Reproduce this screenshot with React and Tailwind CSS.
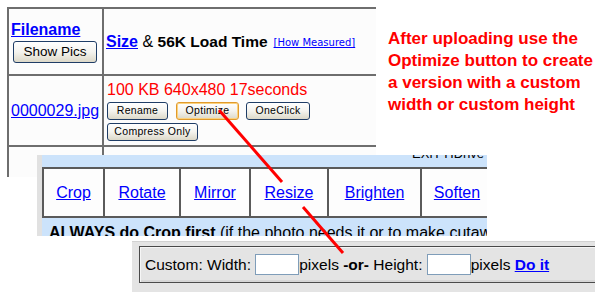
export default function App() {
  const btn =
    "h-[18px] rounded-[3px] border border-[#1f3d66] bg-gradient-to-b from-white via-[#f4f3ee] to-[#dcd8c8] text-[10.5px] tracking-[0.3px] font-['Liberation_Sans',Arial,sans-serif] text-black flex items-center justify-center leading-none";
  return (
    <div className="relative w-[610px] h-[300px] overflow-hidden bg-white font-['Liberation_Sans',Arial,sans-serif] text-black">
      <div className="flex pt-[7px] pl-[7px]">
        <div className="w-[369px] shrink-0 grid grid-cols-[95px_1fr] border-t-2 border-l-2 border-[#6e6e6e] bg-[#fcfcfc]">
          <div className="h-[67px] border-r-2 border-b-2 border-[#6e6e6e] flex flex-col justify-center pl-[2px]">
            <a className="text-[16px] leading-[18px] font-bold text-[#0000ff] underline">Filename</a>
            <button className="mt-[2px] ml-[2px] w-[84px] h-[22px] rounded-[3px] border border-[#1f3d66] bg-gradient-to-b from-white via-[#f4f3ee] to-[#dcd8c8] text-[13.5px] leading-none text-black">
              Show Pics
            </button>
          </div>
          <div className="h-[67px] border-b-2 border-[#6e6e6e] flex items-center pl-[2px] whitespace-nowrap">
            <a className="text-[16px] font-bold text-[#0000ff] underline">Size</a>
            <span className="text-[16px]">&nbsp;&amp;&nbsp;</span>
            <span className="text-[15.5px] font-bold">56K Load Time</span>
            <span className="text-[10px] ml-[6px] mt-[2px] font-['DejaVu_Sans',Verdana,sans-serif] text-[#0000ff] underline">[How Measured]</span>
          </div>
          <div className="h-[71px] border-r-2 border-b-2 border-[#6e6e6e] flex items-center pl-[2px]">
            <a className="text-[16px] text-[#0000ff] underline">0000029.jpg</a>
          </div>
          <div className="h-[71px] border-b-2 border-[#6e6e6e] flex flex-col justify-center pl-[3px]">
            <div className="text-[16px] leading-[18px] text-[#ff0000] whitespace-nowrap">100 KB 640x480 17seconds</div>
            <div className="flex mt-[3px]">
              <button className={btn + " w-[61px]"}>Rename</button>
              <button className="ml-[8px] w-[63px] h-[18px] rounded-[3px] border border-[#e19a2c] shadow-[inset_0_0_0_1px_#fbd27e] bg-gradient-to-b from-white via-[#f4f3ee] to-[#dcd8c8] text-[10.5px] tracking-[0.3px] flex items-center justify-center leading-none">
                Optimize
              </button>
              <button className={btn + " ml-[7px] w-[64px]"}>OneClick</button>
            </div>
            <div className="flex mt-[3px]">
              <button className={btn + " w-[91px]"}>Compress Only</button>
            </div>
          </div>
          <div className="h-[30px] border-r-2 border-[#6e6e6e]" />
          <div className="h-[30px]" />
        </div>
        <div className="ml-[12px] pt-[21px] text-[#ff0000] font-bold text-[17px] leading-[22px] whitespace-nowrap">
          <div>After uploading use the</div>
          <div>Optimize button to create</div>
          <div>a version with a custom</div>
          <div>width or custom height</div>
        </div>
      </div>

      {/* pasted panel: edit links */}
      <div className="absolute left-[37px] top-[155px] w-[450px] h-[81px] flex overflow-hidden">
        <div className="w-[5px] shrink-0 bg-[#e1e1e1]" />
        <div className="flex-1 flex flex-col bg-[#cce3fb] min-w-0">
          <div className="h-[12px] overflow-hidden flex justify-end pr-[3px]">
            <span className="text-[13px] leading-[13px] mt-[-8px] whitespace-nowrap">EXIT HDrive</span>
          </div>
          <div className="flex h-[51px] border-t-2 border-b-2 border-l-2 border-[#5a5a5a] bg-[#fdfdfd] text-[16px]">
            <div className="w-[61px] shrink-0 border-r-2 border-[#5a5a5a] flex items-center justify-center">
              <a className="text-[#0000ff] underline">Crop</a>
            </div>
            <div className="w-[76px] shrink-0 border-r-2 border-[#5a5a5a] flex items-center justify-center">
              <a className="text-[#0000ff] underline">Rotate</a>
            </div>
            <div className="w-[70px] shrink-0 border-r-2 border-[#5a5a5a] flex items-center justify-center">
              <a className="text-[#0000ff] underline">Mirror</a>
            </div>
            <div className="w-[78px] shrink-0 border-r-2 border-[#5a5a5a] flex items-center justify-center">
              <a className="text-[#0000ff] underline">Resize</a>
            </div>
            <div className="w-[93px] shrink-0 border-r-2 border-[#5a5a5a] flex items-center justify-center">
              <a className="text-[#0000ff] underline">Brighten</a>
            </div>
            <div className="w-[70px] shrink-0 flex items-center justify-center">
              <a className="text-[#0000ff] underline">Soften</a>
            </div>
          </div>
          <div className="flex-1 overflow-hidden pl-[7px] pt-[7px] text-[16px] leading-[16px] whitespace-nowrap">
            <b>ALWAYS do Crop first</b> (if the photo needs it or to make cutaways)
          </div>
        </div>
      </div>

      {/* pasted panel: custom size */}
      <div className="absolute left-[132px] top-[241px] w-[463px] h-[51px] bg-[#e4e4e4] border-t border-[#d2d2d2] pt-[4px] pl-[7px] overflow-hidden">
        <div className="h-[37px] border-t border-l border-b border-[#4a4a4a] shadow-[inset_1px_1px_0_#f6f6f6,inset_0_-2px_0_#d6d6d6] flex items-center pl-[5px] text-[15.5px] whitespace-nowrap">
          <span>Custom: Width:&nbsp;</span>
          <span className="inline-block w-[44px] h-[21px] border border-[#7f9db9] bg-white" />
          <span>pixels&nbsp;</span>
          <b>-or-</b>
          <span>&nbsp;Height:&nbsp;</span>
          <span className="inline-block w-[44px] h-[21px] border border-[#7f9db9] bg-white" />
          <span>pixels&nbsp;</span>
          <a className="font-bold text-[#0000ff] underline">Do it</a>
        </div>
      </div>

      <svg className="absolute left-0 top-0 pointer-events-none" width="610" height="300" viewBox="0 0 610 300">
        <line x1="219" y1="110" x2="282" y2="182" stroke="#ff0000" strokeWidth="3" />
        <line x1="303" y1="207" x2="343" y2="253" stroke="#ff0000" strokeWidth="3" />
      </svg>
    </div>
  );
}
